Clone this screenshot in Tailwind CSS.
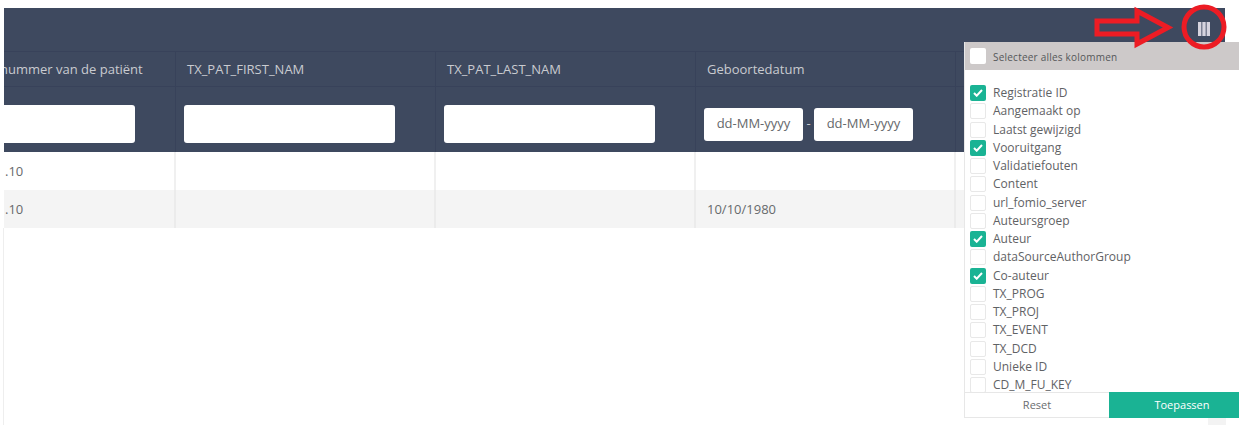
<!doctype html>
<html><head><meta charset="utf-8"><script src="https://cdn.jsdelivr.net/npm/@tailwindcss/browser@4"></script></head>
<body class="bg-white">
<div class="relative w-[1239px] h-[425px] overflow-hidden bg-white font-['Open_Sans',sans-serif] text-[13px] text-[#676a6c]">
  <div class="absolute left-[3px] top-[228px] h-[197px] w-px bg-[#eeeeee]"></div>
  <div class="absolute left-[1208px] top-[418px] h-[7px] w-[18px] bg-[#f3f3f3]"></div>
  <div class="ml-[4px] mt-[8px] w-[1221px] overflow-hidden">
    <div class="h-[44px] bg-[#3e495f] border-b border-[#38425a]"></div>
    <div class="flex h-[35px] bg-[#3e495f] border-b border-[#38425a] text-[#c9cbd0] items-center">
      <div class="w-[172px] h-full flex items-center pt-[2px] border-r border-[#38425a] overflow-hidden whitespace-nowrap"><span class="ml-[-4px]">nummer van de patiënt</span></div>
      <div class="w-[260px] h-full flex items-center pt-[2px] pl-[11px] border-r border-[#38425a]">TX_PAT_FIRST_NAM</div>
      <div class="w-[260px] h-full flex items-center pt-[2px] pl-[11px] border-r border-[#38425a]">TX_PAT_LAST_NAM</div>
      <div class="w-[260px] h-full flex items-center pt-[2px] pl-[11px] border-r border-[#38425a]">Geboortedatum</div>
      <div class="flex-1"></div>
    </div>
    <div class="flex h-[65px] bg-[#3e495f] items-center">
      <div class="w-[172px] h-full flex items-center pt-[9px] border-r border-[#38425a]"><div class="w-[131px] h-[38px] bg-white rounded-r-[3px]"></div></div>
      <div class="w-[260px] h-full flex items-center pt-[9px] pl-[8px] border-r border-[#38425a]"><div class="w-[211px] h-[38px] bg-white rounded-[3px]"></div></div>
      <div class="w-[260px] h-full flex items-center pt-[9px] pl-[8px] border-r border-[#38425a]"><div class="w-[211px] h-[38px] bg-white rounded-[3px]"></div></div>
      <div class="w-[260px] h-full flex items-center pt-[9px] pl-[8px] border-r border-[#38425a]">
        <div class="w-[99px] h-[33px] bg-white rounded-[3px] flex items-center justify-center text-[#65686a]">dd-MM-yyyy</div>
        <div class="w-[11px] text-center text-[#c9cbd0]">-</div>
        <div class="w-[99px] h-[33px] bg-white rounded-[3px] flex items-center justify-center text-[#65686a]">dd-MM-yyyy</div>
      </div>
      <div class="flex-1 h-full flex items-center pt-[9px] pl-[8px]"><div class="w-[40px] h-[33px] bg-white rounded-[3px]"></div></div>
    </div>
    <div class="flex h-[38px] bg-white items-center">
      <div class="w-[172px] h-full flex items-center pt-[2px] border-r-2 border-[#f0f0f0]"><span class="pl-[1px]">.10</span></div>
      <div class="w-[260px] h-full border-r-2 border-[#f0f0f0]"></div>
      <div class="w-[260px] h-full border-r-2 border-[#f0f0f0]"></div>
      <div class="w-[260px] h-full border-r-2 border-[#f0f0f0]"></div>
      <div class="flex-1"></div>
    </div>
    <div class="flex h-[38px] bg-[#f4f4f4] items-center">
      <div class="w-[172px] h-full flex items-center pt-[2px] border-r-2 border-[#ebebeb]"><span class="pl-[1px]">.10</span></div>
      <div class="w-[260px] h-full border-r-2 border-[#ebebeb]"></div>
      <div class="w-[260px] h-full border-r-2 border-[#ebebeb]"></div>
      <div class="w-[260px] h-full flex items-center pt-[2px] pl-[11px] border-r-2 border-[#ebebeb]">10/10/1980</div>
      <div class="flex-1"></div>
    </div>
  </div>

  <!-- column menu -->
  <div class="absolute left-[964px] top-[42px] w-[275px] h-[376px] bg-white flex flex-col border-l border-[#e7e7e7]">
    <div class="h-[28px] bg-[#cdc9c9] flex items-center pl-[5px] shrink-0">
      <span class="w-[16px] h-[16px] bg-white rounded-[2px] shrink-0"></span>
      <span class="ml-[7px] pt-[2px] text-[10px] tracking-[0.22px] text-[#555759]">Selecteer alles kolommen</span>
    </div>
    <div class="h-[322px] pt-[14px] overflow-hidden shrink-0 text-[12px] leading-[18.25px] text-[#5f6265]">
      <div class="flex items-center h-[18.25px] pl-[5px]"><span class="w-[16px] h-[16px] rounded-[2px] bg-[#1ab394] shrink-0 flex items-center justify-center"><svg width="10" height="8" viewBox="0 0 10 8" fill="none" stroke="white" stroke-width="2"><path d="M1 4l2.700 2.700L9 1"/></svg></span><span class="ml-[7px]">Registratie ID</span></div>
      <div class="flex items-center h-[18.25px] pl-[5px]"><span class="w-[16px] h-[16px] rounded-[2px] border border-[#e8e8e8] shrink-0"></span><span class="ml-[7px]">Aangemaakt op</span></div>
      <div class="flex items-center h-[18.25px] pl-[5px]"><span class="w-[16px] h-[16px] rounded-[2px] border border-[#e8e8e8] shrink-0"></span><span class="ml-[7px]">Laatst gewijzigd</span></div>
      <div class="flex items-center h-[18.25px] pl-[5px]"><span class="w-[16px] h-[16px] rounded-[2px] bg-[#1ab394] shrink-0 flex items-center justify-center"><svg width="10" height="8" viewBox="0 0 10 8" fill="none" stroke="white" stroke-width="2"><path d="M1 4l2.700 2.700L9 1"/></svg></span><span class="ml-[7px]">Vooruitgang</span></div>
      <div class="flex items-center h-[18.25px] pl-[5px]"><span class="w-[16px] h-[16px] rounded-[2px] border border-[#e8e8e8] shrink-0"></span><span class="ml-[7px]">Validatiefouten</span></div>
      <div class="flex items-center h-[18.25px] pl-[5px]"><span class="w-[16px] h-[16px] rounded-[2px] border border-[#e8e8e8] shrink-0"></span><span class="ml-[7px]">Content</span></div>
      <div class="flex items-center h-[18.25px] pl-[5px]"><span class="w-[16px] h-[16px] rounded-[2px] border border-[#e8e8e8] shrink-0"></span><span class="ml-[7px]">url_fomio_server</span></div>
      <div class="flex items-center h-[18.25px] pl-[5px]"><span class="w-[16px] h-[16px] rounded-[2px] border border-[#e8e8e8] shrink-0"></span><span class="ml-[7px]">Auteursgroep</span></div>
      <div class="flex items-center h-[18.25px] pl-[5px]"><span class="w-[16px] h-[16px] rounded-[2px] bg-[#1ab394] shrink-0 flex items-center justify-center"><svg width="10" height="8" viewBox="0 0 10 8" fill="none" stroke="white" stroke-width="2"><path d="M1 4l2.700 2.700L9 1"/></svg></span><span class="ml-[7px]">Auteur</span></div>
      <div class="flex items-center h-[18.25px] pl-[5px]"><span class="w-[16px] h-[16px] rounded-[2px] border border-[#e8e8e8] shrink-0"></span><span class="ml-[7px]">dataSourceAuthorGroup</span></div>
      <div class="flex items-center h-[18.25px] pl-[5px]"><span class="w-[16px] h-[16px] rounded-[2px] bg-[#1ab394] shrink-0 flex items-center justify-center"><svg width="10" height="8" viewBox="0 0 10 8" fill="none" stroke="white" stroke-width="2"><path d="M1 4l2.700 2.700L9 1"/></svg></span><span class="ml-[7px]">Co-auteur</span></div>
      <div class="flex items-center h-[18.25px] pl-[5px]"><span class="w-[16px] h-[16px] rounded-[2px] border border-[#e8e8e8] shrink-0"></span><span class="ml-[7px]">TX_PROG</span></div>
      <div class="flex items-center h-[18.25px] pl-[5px]"><span class="w-[16px] h-[16px] rounded-[2px] border border-[#e8e8e8] shrink-0"></span><span class="ml-[7px]">TX_PROJ</span></div>
      <div class="flex items-center h-[18.25px] pl-[5px]"><span class="w-[16px] h-[16px] rounded-[2px] border border-[#e8e8e8] shrink-0"></span><span class="ml-[7px]">TX_EVENT</span></div>
      <div class="flex items-center h-[18.25px] pl-[5px]"><span class="w-[16px] h-[16px] rounded-[2px] border border-[#e8e8e8] shrink-0"></span><span class="ml-[7px]">TX_DCD</span></div>
      <div class="flex items-center h-[18.25px] pl-[5px]"><span class="w-[16px] h-[16px] rounded-[2px] border border-[#e8e8e8] shrink-0"></span><span class="ml-[7px]">Unieke ID</span></div>
      <div class="flex items-center h-[18.25px] pl-[5px]"><span class="w-[16px] h-[16px] rounded-[2px] border border-[#e8e8e8] shrink-0"></span><span class="ml-[7px]">CD_M_FU_KEY</span></div>
    </div>
    <div class="flex h-[26px] shrink-0 text-[11px]">
      <div class="w-[144px] flex items-center justify-center pt-[1px] border-t border-b border-[#e7e7e7] text-[#6a6d70]">Reset</div>
      <div class="flex-1 flex items-center justify-center pt-[1px] pl-[16px] bg-[#1ab394] text-white">Toepassen</div>
    </div>
  </div>

  <!-- column toggle + red annotation -->
  <svg class="absolute left-[1090px] top-0" width="149" height="52" viewBox="1090 0 149 52" fill="none">
    <rect x="1198" y="22" width="3.400" height="14" fill="#d6d3de"/>
    <rect x="1202.300" y="22" width="3.400" height="14" fill="#d6d3de"/>
    <rect x="1206.600" y="22" width="3.400" height="14" fill="#d6d3de"/>
    <path d="M1097 21H1137V11L1168 27.500L1137 44V34H1097Z" stroke="#ed1c24" stroke-width="5"/>
    <circle cx="1204" cy="27" r="20" stroke="#ed1c24" stroke-width="5"/>
  </svg>
</div>
</body></html>
